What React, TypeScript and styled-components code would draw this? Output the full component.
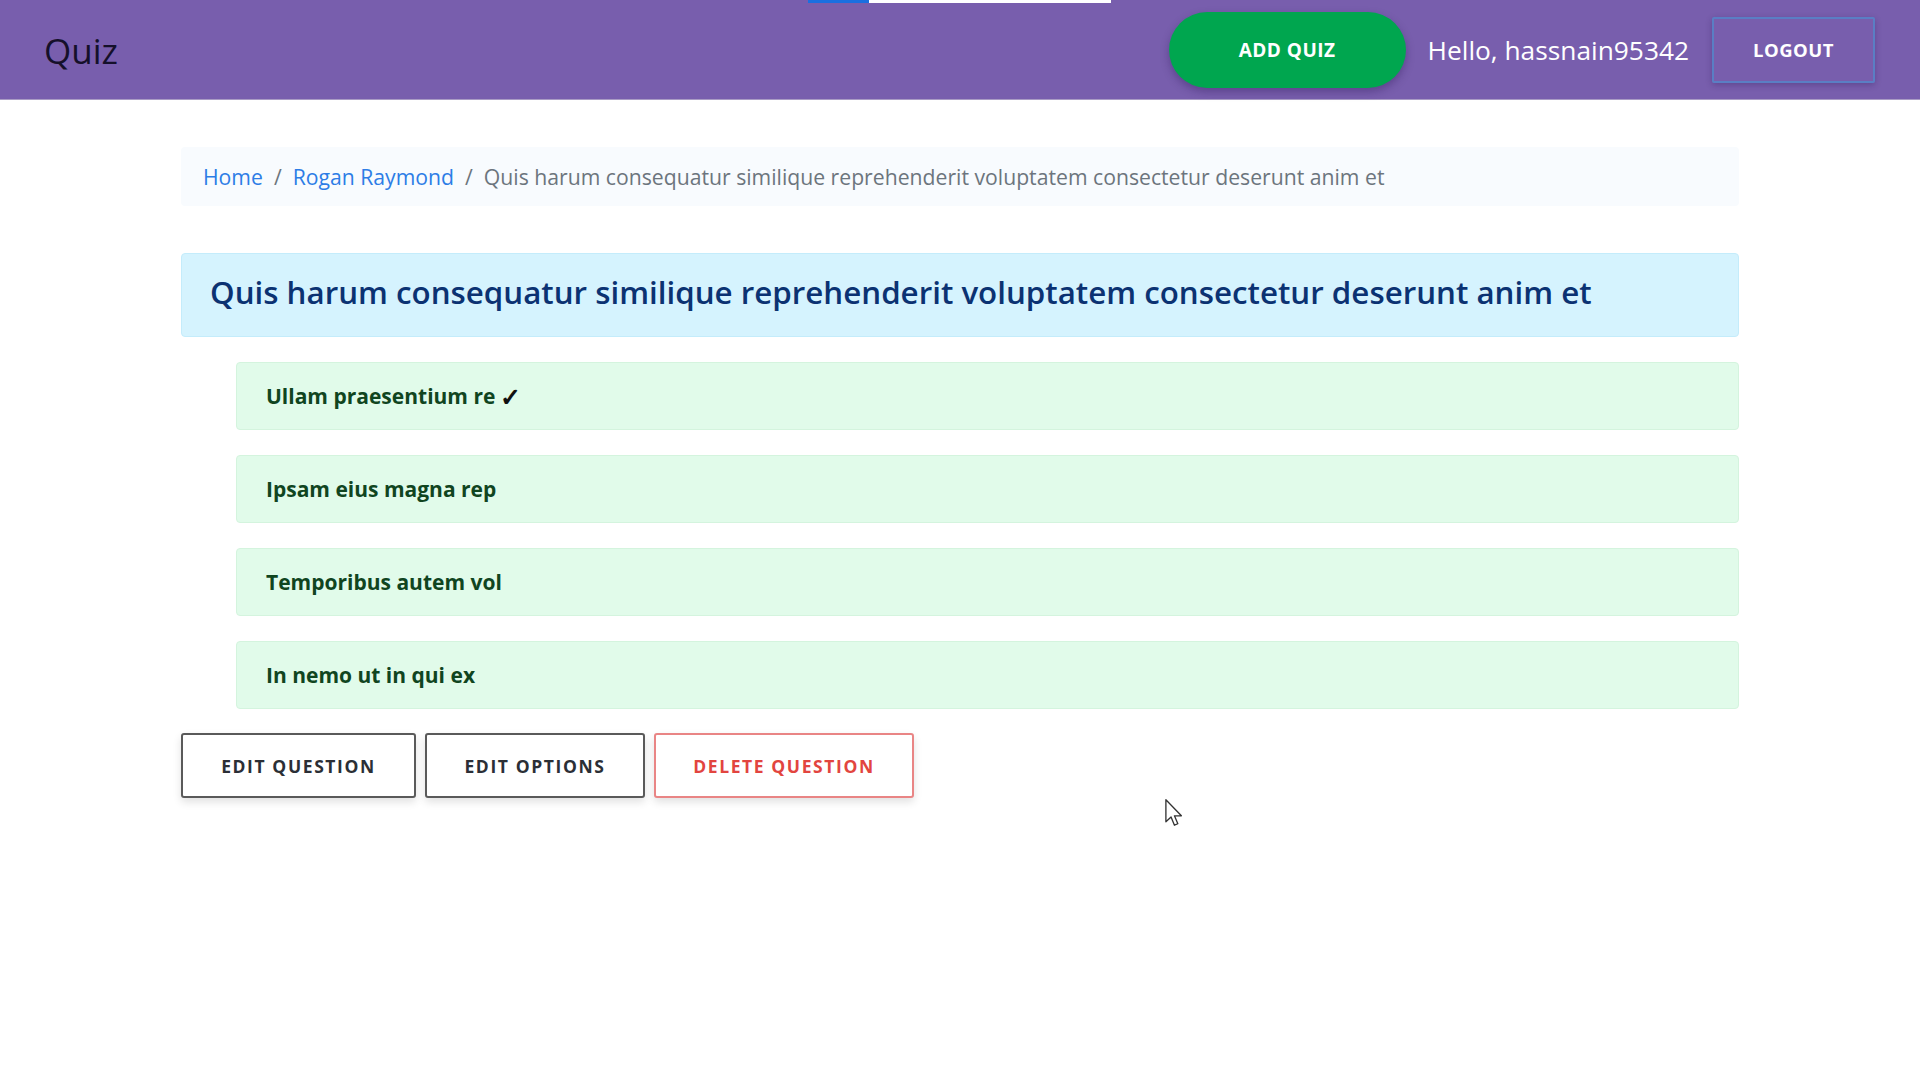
import React from "react";
import styled, { createGlobalStyle } from "styled-components";

const Global = createGlobalStyle`
  html, body { margin: 0; padding: 0; background: #ffffff; }
  body { font-family: "Segoe UI", "Open Sans", "Noto Sans", sans-serif; }
  * { box-sizing: border-box; }
`;

const Page = styled.div`
  position: relative;
  min-height: 1080px;
`;

const TopLoader = styled.div`
  position: absolute;
  top: 0;
  left: 808px;
  display: flex;
  height: 3px;
  z-index: 5;
`;

const LoaderSeg = styled.div<{ $w: number; $c: string }>`
  width: ${(p) => p.$w}px;
  background: ${(p) => p.$c};
`;

const Header = styled.header`
  height: 100px;
  background: #785ead;
  border-bottom: 1px solid #a99bc4;
  display: flex;
  align-items: center;
  padding: 0 45px 0 44px;
`;

const Brand = styled.div`
  font-size: 35px;
  color: #15102a;
  flex: 1;
  margin-top: 2px;
`;

const AddQuiz = styled.button`
  width: 237px;
  height: 76px;
  border-radius: 38px;
  border: none;
  background: #00a64f;
  color: #ffffff;
  font-family: inherit;
  font-weight: 700;
  font-size: 19px;
  letter-spacing: 0.5px;
  box-shadow: 0 4px 8px rgba(40, 20, 80, 0.35);
  margin-right: 22px;
`;

const Hello = styled.div`
  color: #ffffff;
  font-size: 26.3px;
  margin-right: 23px;
`;

const Logout = styled.button`
  width: 163px;
  height: 66px;
  background: transparent;
  border: 2px solid #5a7ec4;
  border-radius: 2px;
  color: #ffffff;
  font-family: inherit;
  font-weight: 700;
  font-size: 18.5px;
  letter-spacing: 0.5px;
  box-shadow: 0 2px 6px rgba(40, 20, 80, 0.3);
`;

const Container = styled.main`
  width: 1558px;
  margin: 47px auto 0;
  display: flex;
  flex-direction: column;
`;

const Breadcrumb = styled.nav`
  height: 59px;
  background: #f8fbfe;
  display: flex;
  align-items: center;
  padding: 0 22px;
  font-size: 21.2px;
  border-radius: 4px;
`;

const Crumb = styled.a`
  color: #2d7de6;
  text-decoration: none;
`;

const Sep = styled.span`
  color: #6c757d;
  padding: 0 11px;
`;

const Active = styled.span`
  color: #6c757d;
`;

const QuestionBox = styled.div`
  margin-top: 47px;
  height: 84px;
  background: #d5f3fe;
  border: 1px solid #c4ecfb;
  border-radius: 4px;
  display: flex;
  align-items: center;
  padding: 0 28px 7px;
  font-size: 31.3px;
  font-weight: 600;
  color: #0b3272;
`;

const Options = styled.div`
  margin: 25px 0 0 55px;
  display: flex;
  flex-direction: column;
  gap: 25px;
`;

const Option = styled.div`
  height: 68px;
  background: #e1fbea;
  border: 1px solid #d4f4de;
  border-radius: 4px;
  display: flex;
  align-items: center;
  padding: 0 29px;
  font-size: 21px;
  font-weight: 700;
  color: #10451f;
`;

const Check = styled.span`
  color: #111;
  margin-left: 5px;
  font-size: 1.2em;
  font-weight: 700;
`;

const Actions = styled.div`
  margin-top: 24px;
  display: flex;
  gap: 9px;
`;

const ActionButton = styled.button<{ $w: number; $danger?: boolean }>`
  width: ${(p) => p.$w}px;
  height: 65px;
  background: #ffffff;
  border: 2px solid ${(p) => (p.$danger ? "#e98585" : "#5a5a5a")};
  border-radius: 3px;
  color: ${(p) => (p.$danger ? "#e2453f" : "#2b2f36")};
  font-family: inherit;
  font-weight: 700;
  font-size: 17.5px;
  letter-spacing: 1.6px;
  box-shadow: 0 4px 8px rgba(0, 0, 0, 0.12);
`;

const Cursor = styled.svg`
  position: absolute;
  left: 1165px;
  top: 799px;
  width: 18px;
  height: 28px;
`;

export default function App() {
  return (
    <Page>
      <Global />
      <TopLoader>
        <LoaderSeg $w={61} $c="#1a6fe0" />
        <LoaderSeg $w={242} $c="#ffffff" />
      </TopLoader>
      <Header>
        <Brand>Quiz</Brand>
        <AddQuiz>ADD QUIZ</AddQuiz>
        <Hello>Hello, hassnain95342</Hello>
        <Logout>LOGOUT</Logout>
      </Header>
      <Container>
        <Breadcrumb>
          <Crumb href="#">Home</Crumb>
          <Sep>/</Sep>
          <Crumb href="#">Rogan Raymond</Crumb>
          <Sep>/</Sep>
          <Active>
            Quis harum consequatur similique reprehenderit voluptatem consectetur deserunt anim et
          </Active>
        </Breadcrumb>
        <QuestionBox>
          Quis harum consequatur similique reprehenderit voluptatem consectetur deserunt anim et
        </QuestionBox>
        <Options>
          <Option>
            Ullam praesentium re<Check>✓</Check>
          </Option>
          <Option>Ipsam eius magna rep</Option>
          <Option>Temporibus autem vol</Option>
          <Option>In nemo ut in qui ex</Option>
        </Options>
        <Actions>
          <ActionButton $w={235}>EDIT QUESTION</ActionButton>
          <ActionButton $w={220}>EDIT OPTIONS</ActionButton>
          <ActionButton $w={260} $danger>
            DELETE QUESTION
          </ActionButton>
        </Actions>
      </Container>
      <Cursor viewBox="0 0 12 19">
        <path
          d="M0.5 0.5 L0.5 15.5 L4 12.2 L6.3 17.8 L8.6 16.8 L6.3 11.4 L11 11.4 Z"
          fill="#ffffff"
          stroke="#333"
          strokeWidth="0.9"
          strokeLinejoin="round"
        />
      </Cursor>
    </Page>
  );
}
